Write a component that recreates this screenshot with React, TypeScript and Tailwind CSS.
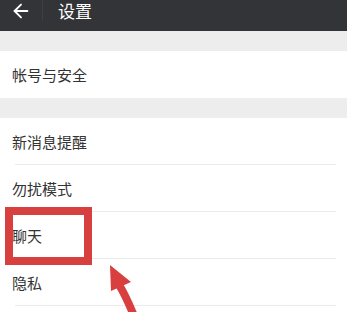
import { ArrowLeft } from 'lucide-react';

const groups: string[][] = [['帐号与安全'], ['新消息提醒', '勿扰模式', '聊天', '隐私']];

function SettingRow({ label, last }: { label: string; last: boolean }) {
  return (
    <div className="relative flex h-[47px] items-center bg-white pl-[12px]">
      <span className="text-[15px] leading-none text-[#333]">{label}</span>
      {last ? null : <div className="absolute bottom-0 left-[15px] right-[11px] h-px bg-[#ebebeb]" />}
    </div>
  );
}

export default function App() {
  return (
    <div
      className="relative h-[312px] w-[347px] overflow-hidden bg-[#ededed]"
      style={{ fontFamily: '"Noto Sans CJK SC", "Noto Sans", sans-serif' }}
    >
      <header className="flex h-[31px] items-start bg-[#333438]">
        <div className="flex h-[21px] w-[43px] items-center border-r border-[#3e3f43] pl-[10px]">
          <ArrowLeft className="size-[22px] text-white" strokeWidth={2} />
        </div>
        <h1 className="pl-[15px] text-[17px] leading-[21px] text-white">设置</h1>
      </header>

      <div className="flex flex-col gap-[20px] pt-[20px]">
        {groups.map((group, i) => (
          <div className="flex flex-col" key={i}>
            {group.map((label, j) => (
              <SettingRow key={label} label={label} last={i === 0 && j === group.length - 1} />
            ))}
            {i === 0 ? null : <div className="h-[12px] bg-white" />}
          </div>
        ))}
      </div>

      {/* annotation: red box around 聊天 */}
      <div className="pointer-events-none absolute left-[5px] top-[207px] h-[58px] w-[87px] border-[8px] border-[#d8403f]" />

      {/* annotation: red arrow */}
      <svg className="pointer-events-none absolute left-0 top-0" width="347" height="312" viewBox="0 0 347 312">
        <path d="M118 283 Q126 296 134 316" fill="none" stroke="#d8403f" strokeWidth="8" />
        <path d="M110 265 L131 282 L111 291 Z" fill="#d8403f" />
      </svg>
    </div>
  );
}
